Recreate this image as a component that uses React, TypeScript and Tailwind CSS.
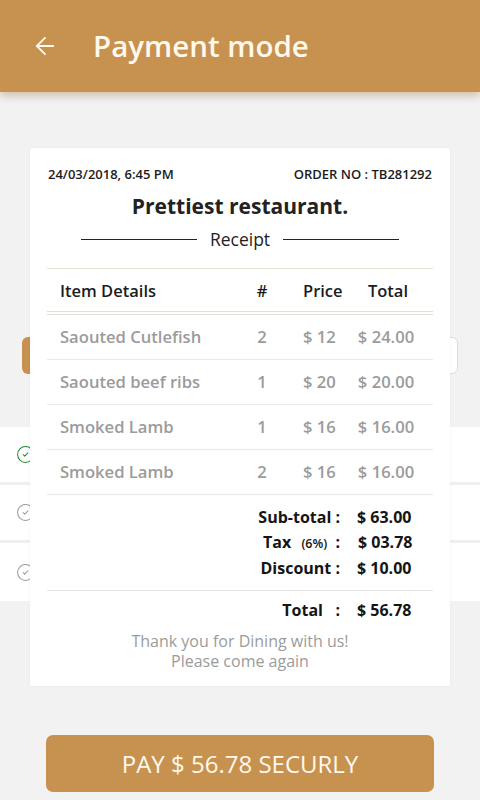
import { ArrowLeft, CircleCheck } from 'lucide-react'

const ITEMS = [
  { name: 'Saouted Cutlefish', qty: 2, price: '$ 12', total: '$ 24.00' },
  { name: 'Saouted beef ribs', qty: 1, price: '$ 20', total: '$ 20.00' },
  { name: 'Smoked Lamb', qty: 1, price: '$ 16', total: '$ 16.00' },
  { name: 'Smoked Lamb', qty: 2, price: '$ 16', total: '$ 16.00' },
]

export default function App() {
  return (
    <div className="relative w-[480px] h-[800px] overflow-hidden bg-[#f2f2f2] font-['Open_Sans',sans-serif]">
      <header className="h-[92px] bg-[#c7924f] flex items-center shadow-[0_4px_8px_rgba(150,100,40,0.35)] relative z-10">
        <ArrowLeft className="ml-[31px] h-[28px] w-[28px] text-[#fff8ec]" strokeWidth={1.6} />
        <h1 className="ml-[34px] text-[29.5px] font-semibold text-[#fff8ec]">Payment mode</h1>
      </header>

      {/* page content under the receipt */}
      <div className="mt-[245px] mx-[22px] flex gap-[12px] h-[37px]">
        <div className="flex-1 rounded-[6px] bg-[#c7924f]" />
        <div className="flex-1 rounded-[6px] border border-[#dcdcdc] bg-white" />
      </div>

      <div className="mt-[53px] bg-white">
        {[0, 1, 2].map((i) => (
          <div
            key={i}
            className={`h-[58px] flex items-center pl-[16px] ${i < 2 ? 'border-b-[3px] border-[#efefef]' : ''}`}
          >
            <CircleCheck
              className={`h-[19px] w-[19px] ${i === 0 ? 'text-[#1f8a2c]' : 'text-[#9a9a9a]'}`}
              strokeWidth={1.3}
            />
          </div>
        ))}
      </div>

      <div className="mt-[134px] mx-[46px]">
        <button className="w-full h-[57px] rounded-[7px] bg-[#c7924f] text-[24px] text-[#fff8ec]">
          PAY $ 56.78 SECURLY
        </button>
      </div>

      {/* receipt overlay */}
      <div className="absolute top-[148px] left-[30px] w-[420px] bg-white rounded-[2px] shadow-[0_0_3px_rgba(0,0,0,0.05)] pt-[17px] pb-[15px]">
        <div className="px-[18px] flex justify-between text-[13px] leading-[18px] font-semibold text-[#1c1c1c]">
          <span>24/03/2018, 6:45 PM</span>
          <span>ORDER NO : TB281292</span>
        </div>
        <h2 className="mt-[9px] text-center text-[21px] leading-[28px] font-bold text-[#222]">Prettiest restaurant.</h2>
        <div className="mt-[8px] flex items-center justify-center gap-[13px] h-[22px]">
          <div className="w-[116px] h-px bg-[#222]" />
          <span className="text-[17.5px] text-[#222]">Receipt</span>
          <div className="w-[116px] h-px bg-[#222]" />
        </div>

        <div className="mx-[17px] mt-[18px] border-t border-[#e6e3da]">
          <div className="h-[46px] pt-[2px] flex items-center pl-[13px] text-[16.5px] font-semibold text-[#1c1c1c] border-b-4 border-double border-[#e3e0d5]">
            <span className="w-[187px]">Item Details</span>
            <span className="w-[30px] text-center">#</span>
            <span className="w-[26px]" />
            <span className="w-[54px]">Price</span>
            <span className="w-[58px] text-center pl-[4px]">Total</span>
          </div>
          {ITEMS.map((it, i) => (
            <div
              key={i}
              className="h-[45px] flex items-center pl-[13px] text-[16.6px] font-semibold text-[#9b9b9b] border-b border-[#e8e8e8] whitespace-nowrap"
            >
              <span className="w-[187px]">{it.name}</span>
              <span className="w-[30px] text-center">{it.qty}</span>
              <span className="w-[26px]" />
              <span className="w-[54px]">{it.price}</span>
              <span className="w-[58px] text-center">{it.total}</span>
            </div>
          ))}

          <div className="pt-[10px] pb-[9px] border-b border-[#e6e6e6] text-[16px] leading-[24.5px] font-bold text-[#151515] whitespace-nowrap">
            <div className="flex">
              <span className="w-[293px] text-right">Sub-total :</span>
              <span className="ml-[17px]">$ 63.00</span>
            </div>
            <div className="flex">
              <span className="w-[293px] text-right">
                Tax <span className="text-[12.5px] font-semibold ml-[6px] mr-[4px]">(6%)</span> :
              </span>
              <span className="ml-[18px]">$ 03.78</span>
            </div>
            <div className="flex">
              <span className="w-[293px] text-right">Discount :</span>
              <span className="ml-[17px]">$ 10.00</span>
            </div>
          </div>
          <div className="pt-[7px] flex text-[16px] leading-[24px] font-bold text-[#151515] whitespace-nowrap">
            <span className="w-[293px] text-right">Total &nbsp;&nbsp;:</span>
            <span className="ml-[17px]">$ 56.78</span>
          </div>
        </div>

        <p className="mt-[9px] text-center text-[16px] leading-[20px] text-[#9b9b9b]">
          Thank you for Dining with us!
          <br />
          Please come again
        </p>
      </div>
    </div>
  )
}
